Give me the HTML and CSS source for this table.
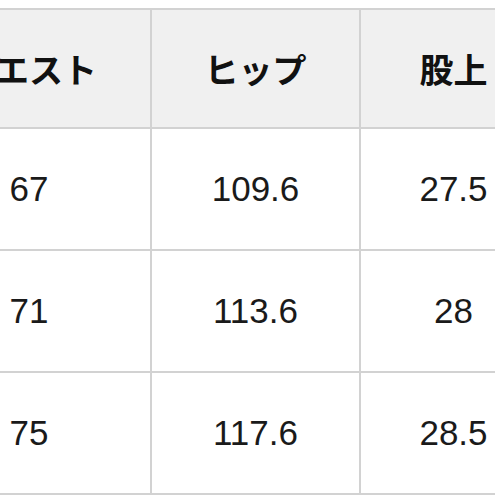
FILE: index.html
```html
<!DOCTYPE html>
<html lang="ja">
<head>
<meta charset="utf-8">
<link rel="stylesheet" href="styles.css">
</head>
<body>
<table class="size-table">
  <colgroup>
    <col class="c1"><col class="c2"><col class="c3">
  </colgroup>
  <thead>
    <tr><th>ウエスト</th><th>ヒップ</th><th>股上</th></tr>
  </thead>
  <tbody>
    <tr><td>67</td><td>109.6</td><td>27.5</td></tr>
    <tr><td>71</td><td>113.6</td><td>28</td></tr>
    <tr><td>75</td><td>117.6</td><td>28.5</td></tr>
  </tbody>
</table>
</body>
</html>
```
FILE: styles.css
```css
html, body {
  margin: 0;
  padding: 0;
  background: #fff;
  overflow: hidden;
}
body {
  padding-top: 8px;
}
.size-table {
  border-collapse: collapse;
  table-layout: fixed;
  width: 640px;
  margin-left: -94px;
  font-family: "Liberation Sans", "Noto Sans CJK JP", sans-serif;
  font-size: 35px;
  color: #1a1a1a;
}
.c1 { width: 244px; }
.c2 { width: 209px; }
.c3 { width: 187px; }
.size-table th,
.size-table td {
  border: 2px solid #d2d2d2;
  text-align: center;
  vertical-align: middle;
  padding: 0;
}
.size-table th {
  height: 117px;
  background: #f0f0f0;
  font-weight: bold;
  font-family: "Noto Sans CJK JP", sans-serif;
  font-size: 34px;
  line-height: 1;
  color: #111;
}
.size-table td {
  height: 120px;
  font-weight: normal;
}
```
